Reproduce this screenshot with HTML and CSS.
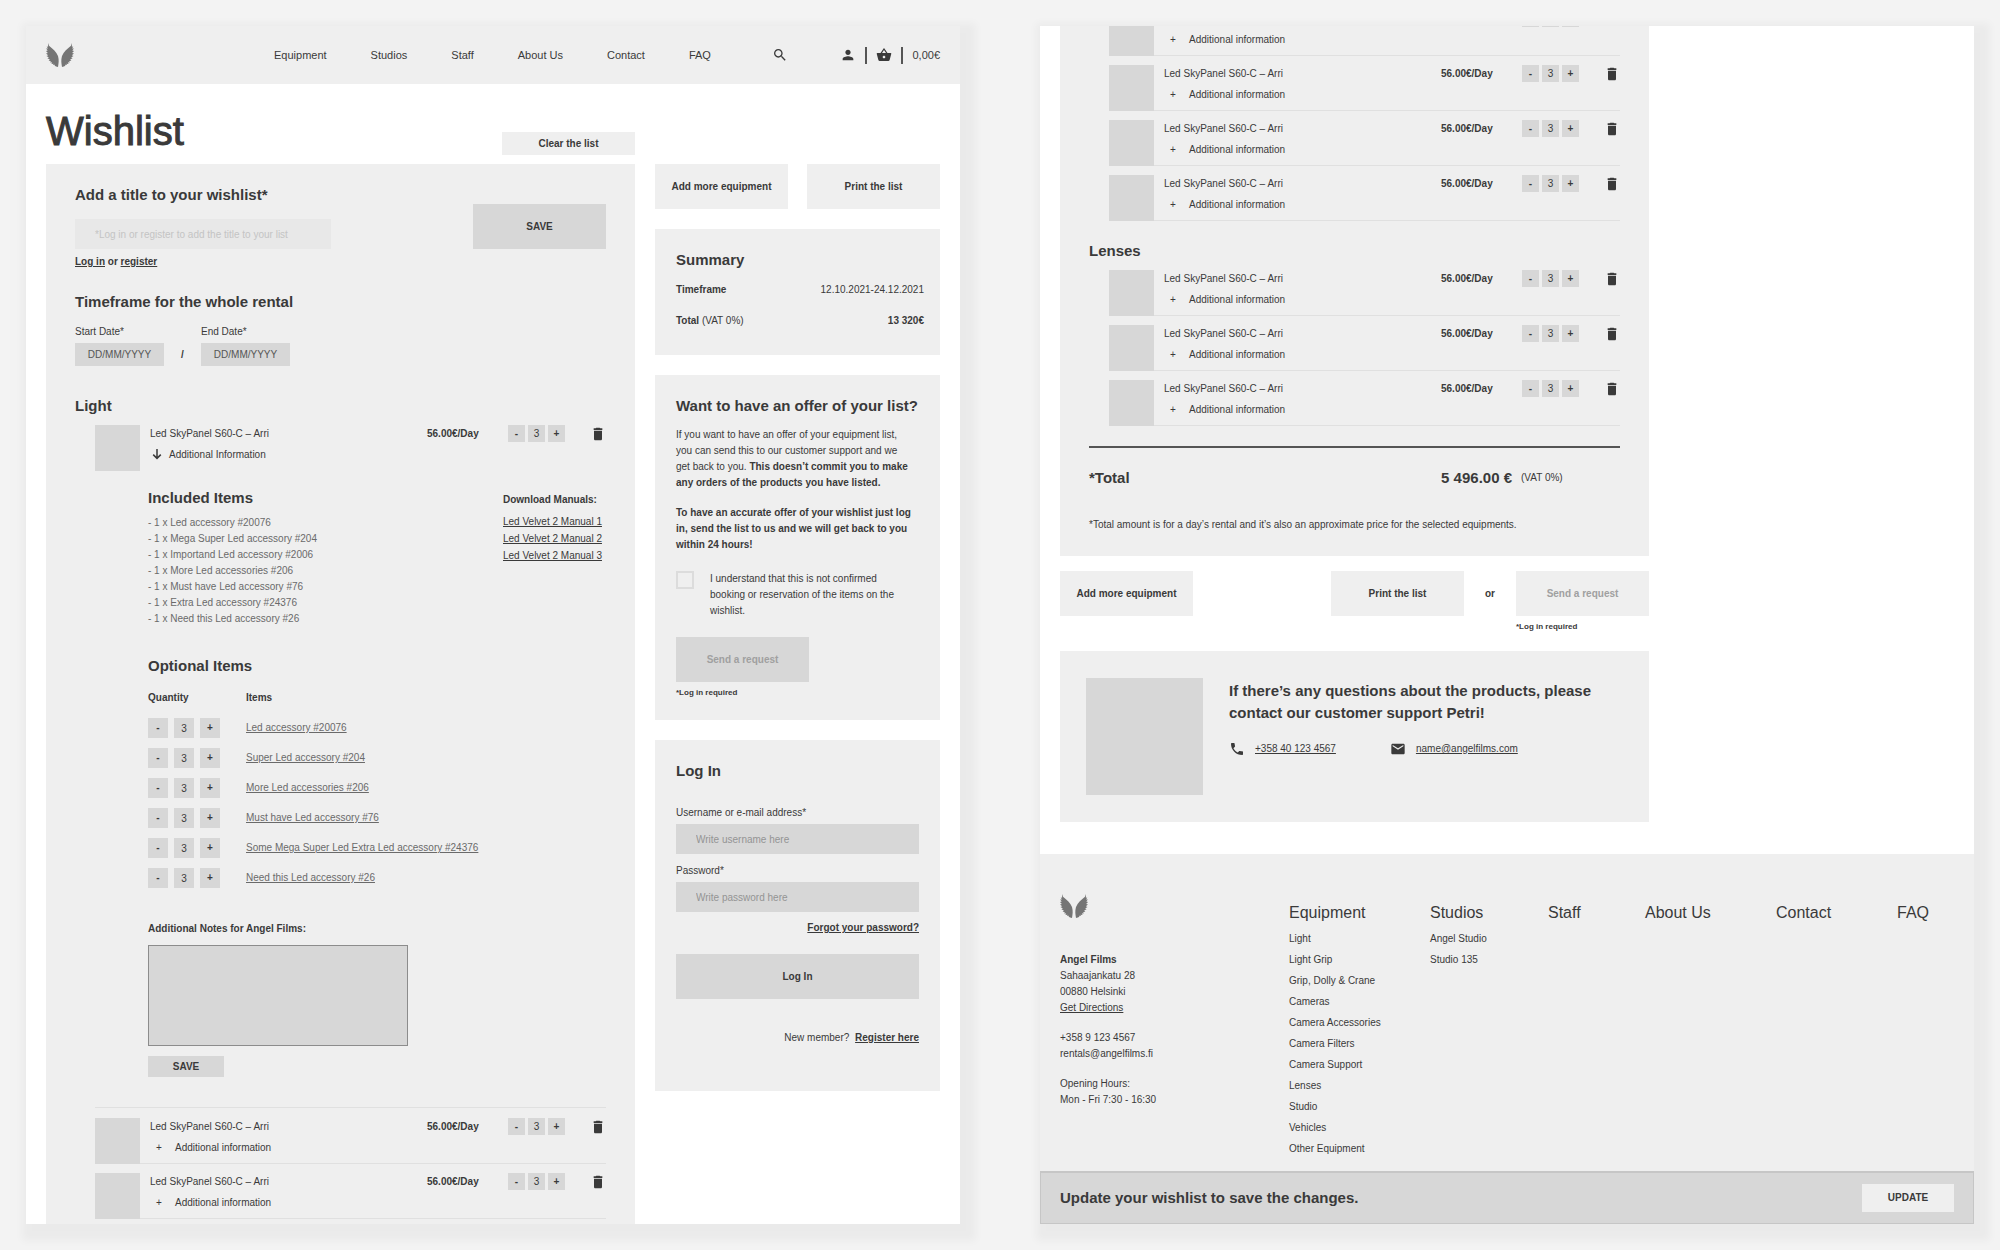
FILE: index.html
```html
<!DOCTYPE html>
<html lang="en">
<head>
    <meta charset="UTF-8">
    <meta name="viewport" content="width=device-width, initial-scale=1.0">
    <title>Wishlist - Angel Films</title>
    <link rel="stylesheet" href="styles.css">
</head>
<body>

<!-- Icon set -->
<svg class="icon-set" aria-hidden="true">
    <symbol id="logo" viewBox="0 0 28 24">
        <path id="wing" d="M2 0L3 2.8C6.4 5.4 10.4 9 12 13C13.2 17 12.6 20.5 12 24C10.6 23.9 9.6 23.5 8.6 22.8L9 21.8L7 22L7.6 20.8L5.4 20.9L6.2 19.6L3.9 19.3L5 18.2L2.6 17.5L3.9 16.4L1.4 15.3L2.9 14.4L.5 12.9L2.2 12.2L0 10.4L1.9 9.9L0 8L1.7 7.6L.1 5.6L1.9 5.6L.7 3.6L2.1 3.7Z"/>
        <use href="#wing" transform="matrix(-1 0 0 1 28 0)"/>
    </symbol>
    <symbol id="search" viewBox="0 0 24 24"><path d="M15.5 14h-.79l-.28-.27C15.41 12.59 16 11.11 16 9.5 16 5.91 13.09 3 9.5 3S3 5.91 3 9.5 5.91 16 9.5 16c1.61 0 3.09-.59 4.23-1.57l.27.28v.79l5 4.99L20.49 19l-4.99-5zm-6 0C7.01 14 5 11.99 5 9.5S7.01 5 9.5 5 14 7.01 14 9.5 11.99 14 9.5 14z"/></symbol>
    <symbol id="person" viewBox="0 0 24 24"><path d="M12 12c2.21 0 4-1.79 4-4s-1.79-4-4-4-4 1.79-4 4 1.79 4 4 4zm0 2c-2.67 0-8 1.34-8 4v2h16v-2c0-2.66-5.33-4-8-4z"/></symbol>
    <symbol id="basket" viewBox="0 0 24 24"><path d="M17.21 9l-4.38-6.56c-.19-.28-.51-.42-.83-.42-.32 0-.64.14-.83.43L6.79 9H2c-.55 0-1 .45-1 1 0 .09.01.18.04.27l2.54 9.27c.23.84 1 1.46 1.92 1.46h13c.92 0 1.69-.62 1.93-1.46l2.54-9.27L23 10c0-.55-.45-1-1-1h-4.79zM9 9l3-4.4L15 9H9zm3 8c-1.1 0-2-.9-2-2s.9-2 2-2 2 .9 2 2-.9 2-2 2z"/></symbol>
    <symbol id="trash" viewBox="0 0 24 24"><path d="M6 19.5c0 1.1.9 2 2 2h8c1.1 0 2-.9 2-2V7H6v12.500zM18.500 3.500h-3l-1-1h-5l-1 1h-3V6h13V3.500z"/></symbol>
    <symbol id="phone" viewBox="0 0 24 24"><path d="M6.62 10.79c1.44 2.83 3.76 5.14 6.59 6.59l2.2-2.2c.27-.27.67-.36 1.02-.24 1.12.37 2.33.57 3.57.57.55 0 1 .45 1 1V20c0 .55-.45 1-1 1-9.39 0-17-7.61-17-17 0-.55.45-1 1-1h3.5c.55 0 1 .45 1 1 0 1.25.2 2.45.57 3.57.11.35.03.74-.25 1.02l-2.2 2.2z"/></symbol>
    <symbol id="mail" viewBox="0 0 24 24"><path d="M20 4H4c-1.1 0-1.99.9-1.99 2L2 18c0 1.1.9 2 2 2h16c1.1 0 2-.9 2-2V6c0-1.1-.9-2-2-2zm0 4l-8 5-8-5V6l8 5 8-5v2z"/></symbol>
    <symbol id="arrow-down" viewBox="0 0 10 12"><path d="M5 1V10.4M1.2 6.6L5 10.4L8.8 6.6" fill="none" stroke="currentColor" stroke-width="1.5"/></symbol>
</svg>

<!-- Top of the wishlist page -->
<div class="screen">
    <header class="header">
        <a href="#" aria-label="Angel Films"><svg class="logo"><use href="#logo"/></svg></a>
        <nav class="main-nav">
            <a href="#">Equipment</a>
            <a href="#">Studios</a>
            <a href="#">Staff</a>
            <a href="#">About Us</a>
            <a href="#">Contact</a>
            <a href="#">FAQ</a>
        </nav>
        <button class="icon-button search-button" aria-label="Search"><svg class="icon"><use href="#search"/></svg></button>
        <div class="header-tools">
            <button class="icon-button" aria-label="Account"><svg class="icon"><use href="#person"/></svg></button>
            <span class="separator"></span>
            <button class="icon-button" aria-label="Basket"><svg class="icon"><use href="#basket"/></svg></button>
            <span class="separator"></span>
            <span>0,00€</span>
        </div>
    </header>

    <main class="wishlist-page">
        <div class="title-row">
            <h1>Wishlist</h1>
            <button class="button button-small">Clear the list</button>
        </div>

        <section class="panel list-panel">
            <form class="title-form">
                <div>
                    <h2><label for="list-title">Add a title to your wishlist*</label></h2>
                    <input class="field title-field" id="list-title" type="text" placeholder="*Log in or register to add the title to your list" disabled>
                </div>
                <button class="button button-dark" type="button">SAVE</button>
            </form>
            <p class="login-hint"><a href="#">Log in</a> or <a href="#">register</a></p>

            <h2 class="timeframe-title">Timeframe for the whole rental</h2>
            <div class="dates">
                <div>
                    <label for="start-date">Start Date*</label>
                    <input class="date-field" id="start-date" type="text" placeholder="DD/MM/YYYY">
                </div>
                <span class="slash">/</span>
                <div>
                    <label for="end-date">End Date*</label>
                    <input class="date-field" id="end-date" type="text" placeholder="DD/MM/YYYY">
                </div>
            </div>

            <h2 class="category">Light</h2>
            <article class="item">
                <div class="thumb"></div>
                <div class="item-info item-open">
                    <span class="item-name">Led SkyPanel S60-C – Arri</span>
                    <b class="price">56.00€/Day</b>
                    <div class="stepper"><button>-</button><input type="text" value="3" aria-label="Quantity"><button>+</button></div>
                    <button class="icon-button" aria-label="Remove"><svg class="icon"><use href="#trash"/></svg></button>
                    <button class="more more-open"><svg class="arrow"><use href="#arrow-down"/></svg>Additional Information</button>
                </div>
            </article>

            <div class="details">
                <div class="included">
                    <div>
                        <h2>Included Items</h2>
                        <ul class="included-list">
                            <li>- 1 x Led accessory #20076</li>
                            <li>- 1 x Mega Super Led accessory #204</li>
                            <li>- 1 x Importand Led accessory #2006</li>
                            <li>- 1 x More Led accessories #206</li>
                            <li>- 1 x Must have Led accessory #76</li>
                            <li>- 1 x Extra Led accessory #24376</li>
                            <li>- 1 x Need this Led accessory #26</li>
                        </ul>
                    </div>
                    <div class="manuals">
                        <h3>Download Manuals:</h3>
                        <a href="#">Led Velvet 2 Manual 1</a>
                        <a href="#">Led Velvet 2 Manual 2</a>
                        <a href="#">Led Velvet 2 Manual 3</a>
                    </div>
                </div>

                <h2 class="optional-title">Optional Items</h2>
                <table class="optional">
                    <thead>
                        <tr><th>Quantity</th><th>Items</th></tr>
                    </thead>
                    <tbody>
                        <tr>
                            <td><div class="stepper stepper-big"><button>-</button><input type="text" value="3" aria-label="Quantity"><button>+</button></div></td>
                            <td><a href="#">Led accessory #20076</a></td>
                        </tr>
                        <tr>
                            <td><div class="stepper stepper-big"><button>-</button><input type="text" value="3" aria-label="Quantity"><button>+</button></div></td>
                            <td><a href="#">Super Led accessory #204</a></td>
                        </tr>
                        <tr>
                            <td><div class="stepper stepper-big"><button>-</button><input type="text" value="3" aria-label="Quantity"><button>+</button></div></td>
                            <td><a href="#">More Led accessories #206</a></td>
                        </tr>
                        <tr>
                            <td><div class="stepper stepper-big"><button>-</button><input type="text" value="3" aria-label="Quantity"><button>+</button></div></td>
                            <td><a href="#">Must have Led accessory #76</a></td>
                        </tr>
                        <tr>
                            <td><div class="stepper stepper-big"><button>-</button><input type="text" value="3" aria-label="Quantity"><button>+</button></div></td>
                            <td><a href="#">Some Mega Super Led Extra Led accessory #24376</a></td>
                        </tr>
                        <tr>
                            <td><div class="stepper stepper-big"><button>-</button><input type="text" value="3" aria-label="Quantity"><button>+</button></div></td>
                            <td><a href="#">Need this Led accessory #26</a></td>
                        </tr>
                    </tbody>
                </table>

                <label class="notes-label" for="notes">Additional Notes for Angel Films:</label>
                <textarea class="notes" id="notes"></textarea>
                <button class="button button-dark notes-save">SAVE</button>
            </div>

            <div class="divider"></div>
            <article class="item">
                <div class="thumb"></div>
                <div class="item-info">
                    <span class="item-name">Led SkyPanel S60-C – Arri</span>
                    <b class="price">56.00€/Day</b>
                    <div class="stepper"><button>-</button><input type="text" value="3" aria-label="Quantity"><button>+</button></div>
                    <button class="icon-button" aria-label="Remove"><svg class="icon"><use href="#trash"/></svg></button>
                    <button class="more"><span class="plus">+</span>Additional information</button>
                </div>
            </article>
            <article class="item">
                <div class="thumb"></div>
                <div class="item-info">
                    <span class="item-name">Led SkyPanel S60-C – Arri</span>
                    <b class="price">56.00€/Day</b>
                    <div class="stepper"><button>-</button><input type="text" value="3" aria-label="Quantity"><button>+</button></div>
                    <button class="icon-button" aria-label="Remove"><svg class="icon"><use href="#trash"/></svg></button>
                    <button class="more"><span class="plus">+</span>Additional information</button>
                </div>
            </article>
        </section>

        <aside class="sidebar">
            <div class="sidebar-buttons">
                <button class="button">Add more equipment</button>
                <button class="button">Print the list</button>
            </div>

            <section class="panel summary">
                <h2>Summary</h2>
                <div class="summary-row"><b>Timeframe</b><span>12.10.2021-24.12.2021</span></div>
                <div class="summary-row"><span><b>Total</b> (VAT 0%)</span><b>13 320€</b></div>
            </section>

            <section class="panel offer">
                <h2>Want to have an offer of your list?</h2>
                <p>If you want to have an offer of your equipment list, you can send this to our customer support and we get back to you. <b>This doesn’t commit you to make any orders of the products you have listed.</b></p>
                <p><b>To have an accurate offer of your wishlist just log in, send the list to us and we will get back to you within 24 hours!</b></p>
                <div class="confirm">
                    <input type="checkbox" id="confirm">
                    <label for="confirm">I understand that this is not confirmed booking or reservation of the items on the wishlist.</label>
                </div>
                <button class="button button-dark" disabled>Send a request</button>
                <p class="caption">*Log in required</p>
            </section>

            <form class="panel login">
                <h2>Log In</h2>
                <label for="username">Username or e-mail address*</label>
                <input class="field" id="username" type="text" placeholder="Write username here">
                <label for="password">Password*</label>
                <input class="field" id="password" type="password" placeholder="Write password here">
                <a class="forgot" href="#">Forgot your password?</a>
                <button class="button button-dark" type="button">Log In</button>
                <p class="register">New member? <a href="#">Register here</a></p>
            </form>
        </aside>
    </main>
</div>

<!-- Bottom of the wishlist page -->
<div class="screen screen-end">
    <main class="list-end">
        <section class="panel list-panel">
            <article class="item">
                <div class="thumb"></div>
                <div class="item-info">
                    <span class="item-name">Led SkyPanel S60-C – Arri</span>
                    <b class="price">56.00€/Day</b>
                    <div class="stepper"><button>-</button><input type="text" value="3" aria-label="Quantity"><button>+</button></div>
                    <button class="icon-button" aria-label="Remove"><svg class="icon"><use href="#trash"/></svg></button>
                    <button class="more"><span class="plus">+</span>Additional information</button>
                </div>
            </article>
            <article class="item">
                <div class="thumb"></div>
                <div class="item-info">
                    <span class="item-name">Led SkyPanel S60-C – Arri</span>
                    <b class="price">56.00€/Day</b>
                    <div class="stepper"><button>-</button><input type="text" value="3" aria-label="Quantity"><button>+</button></div>
                    <button class="icon-button" aria-label="Remove"><svg class="icon"><use href="#trash"/></svg></button>
                    <button class="more"><span class="plus">+</span>Additional information</button>
                </div>
            </article>
            <article class="item">
                <div class="thumb"></div>
                <div class="item-info">
                    <span class="item-name">Led SkyPanel S60-C – Arri</span>
                    <b class="price">56.00€/Day</b>
                    <div class="stepper"><button>-</button><input type="text" value="3" aria-label="Quantity"><button>+</button></div>
                    <button class="icon-button" aria-label="Remove"><svg class="icon"><use href="#trash"/></svg></button>
                    <button class="more"><span class="plus">+</span>Additional information</button>
                </div>
            </article>
            <article class="item">
                <div class="thumb"></div>
                <div class="item-info">
                    <span class="item-name">Led SkyPanel S60-C – Arri</span>
                    <b class="price">56.00€/Day</b>
                    <div class="stepper"><button>-</button><input type="text" value="3" aria-label="Quantity"><button>+</button></div>
                    <button class="icon-button" aria-label="Remove"><svg class="icon"><use href="#trash"/></svg></button>
                    <button class="more"><span class="plus">+</span>Additional information</button>
                </div>
            </article>

            <h2 class="category category-next">Lenses</h2>
            <article class="item">
                <div class="thumb"></div>
                <div class="item-info">
                    <span class="item-name">Led SkyPanel S60-C – Arri</span>
                    <b class="price">56.00€/Day</b>
                    <div class="stepper"><button>-</button><input type="text" value="3" aria-label="Quantity"><button>+</button></div>
                    <button class="icon-button" aria-label="Remove"><svg class="icon"><use href="#trash"/></svg></button>
                    <button class="more"><span class="plus">+</span>Additional information</button>
                </div>
            </article>
            <article class="item">
                <div class="thumb"></div>
                <div class="item-info">
                    <span class="item-name">Led SkyPanel S60-C – Arri</span>
                    <b class="price">56.00€/Day</b>
                    <div class="stepper"><button>-</button><input type="text" value="3" aria-label="Quantity"><button>+</button></div>
                    <button class="icon-button" aria-label="Remove"><svg class="icon"><use href="#trash"/></svg></button>
                    <button class="more"><span class="plus">+</span>Additional information</button>
                </div>
            </article>
            <article class="item">
                <div class="thumb"></div>
                <div class="item-info">
                    <span class="item-name">Led SkyPanel S60-C – Arri</span>
                    <b class="price">56.00€/Day</b>
                    <div class="stepper"><button>-</button><input type="text" value="3" aria-label="Quantity"><button>+</button></div>
                    <button class="icon-button" aria-label="Remove"><svg class="icon"><use href="#trash"/></svg></button>
                    <button class="more"><span class="plus">+</span>Additional information</button>
                </div>
            </article>

            <div class="total">
                <h2>*Total</h2>
                <h2>5 496.00 €</h2>
                <span>(VAT 0%)</span>
            </div>
            <p class="total-note">*Total amount is for a day’s rental and it’s also an approximate price for the selected equipments.</p>
        </section>

        <div class="actions">
            <button class="button">Add more equipment</button>
            <button class="button print-button">Print the list</button>
            <b class="or">or</b>
            <div>
                <button class="button" disabled>Send a request</button>
                <p class="caption">*Log in required</p>
            </div>
        </div>

        <section class="panel support">
            <div class="portrait"></div>
            <div>
                <h2>If there’s any questions about the products, please contact our customer support Petri!</h2>
                <div class="contacts">
                    <a href="#"><svg class="icon"><use href="#phone"/></svg><span>+358 40 123 4567</span></a>
                    <a href="#"><svg class="icon"><use href="#mail"/></svg><span>name@angelfilms.com</span></a>
                </div>
            </div>
        </section>
    </main>

    <footer class="footer">
        <div class="address">
            <svg class="logo"><use href="#logo"/></svg>
            <p><b>Angel Films</b><br>Sahaajankatu 28<br>00880 Helsinki<br><a href="#">Get Directions</a></p>
            <p>+358 9 123 4567<br>rentals@angelfilms.fi</p>
            <p>Opening Hours:<br>Mon - Fri 7:30 - 16:30</p>
        </div>
        <div class="footer-column">
            <a class="footer-title" href="#">Equipment</a>
            <a href="#">Light</a>
            <a href="#">Light Grip</a>
            <a href="#">Grip, Dolly &amp; Crane</a>
            <a href="#">Cameras</a>
            <a href="#">Camera Accessories</a>
            <a href="#">Camera Filters</a>
            <a href="#">Camera Support</a>
            <a href="#">Lenses</a>
            <a href="#">Studio</a>
            <a href="#">Vehicles</a>
            <a href="#">Other Equipment</a>
        </div>
        <div class="footer-column">
            <a class="footer-title" href="#">Studios</a>
            <a href="#">Angel Studio</a>
            <a href="#">Studio 135</a>
        </div>
        <div class="footer-column"><a class="footer-title" href="#">Staff</a></div>
        <div class="footer-column"><a class="footer-title" href="#">About Us</a></div>
        <div class="footer-column"><a class="footer-title" href="#">Contact</a></div>
        <div class="footer-column"><a class="footer-title" href="#">FAQ</a></div>
    </footer>

    <div class="update-bar">
        <h2>Update your wishlist to save the changes.</h2>
        <button class="button update-button">UPDATE</button>
    </div>
</div>

</body>
</html>
```

FILE: styles.css
```css
* {
    box-sizing: border-box;
}
body {
    display: flex;
    gap: 80px;
    margin: 0;
    padding: 26px;
    background-color: #f3f3f3;
    color: #3a3a3a;
    font-family: "Liberation Sans", Arial, Helvetica, sans-serif;
    font-size: 10px;
    line-height: 16px;
}
h1, h2, h3, p, ul {
    margin: 0;
    padding: 0;
}
h1 {
    font-size: 40px;
    font-weight: normal;
    line-height: 47px;
    -webkit-text-stroke: 1px #3a3a3a;
}
h2 {
    font-size: 15px;
    line-height: 20px;
}
h3 {
    font-size: 10px;
}
a {
    color: inherit;
}
button, input, textarea {
    margin: 0;
    padding: 0;
    border: none;
    border-radius: 0;
    color: inherit;
    font: inherit;
}
button {
    cursor: pointer;
}
.icon-set {
    display: none;
}
.icon {
    display: block;
    width: 16px;
    height: 16px;
    fill: currentColor;
}
.logo {
    display: block;
    width: 28px;
    height: 24px;
    fill: #757575;
}

/* Page views */
.screen {
    display: flex;
    flex: 1;
    flex-direction: column;
    min-width: 0;
    height: calc(100vh - 52px);
    overflow: hidden;
    background-color: white;
    box-shadow: 6px 7px 8px 10px rgba(0,0,0,0.035);
}
.screen-end {
    justify-content: flex-end; /* Shows the end of the page */
}
.screen > * {
    flex-shrink: 0;
}
.panel {
    background-color: #efefef;
}

/* Buttons and fields */
.button {
    width: 133px;
    height: 45px;
    background-color: #efefef;
    font-weight: bold;
}
.button:disabled {
    color: #a0a0a0;
}
.button-small {
    height: 23px;
}
.button-dark {
    background-color: #d7d7d7;
}
.icon-button {
    background: none;
}
.field {
    display: block;
    width: 100%;
    height: 30px;
    padding: 0 20px;
    background-color: #d7d7d7;
}
.field::placeholder {
    color: #949494;
}
.caption {
    margin-top: 5px;
    font-size: 8px;
    font-weight: bold;
    line-height: 12px;
}

/* Header */
.header {
    display: flex;
    align-items: center;
    height: 58px;
    padding: 0 20px;
    background-color: #efefef;
    font-size: 11px;
}
.main-nav {
    display: flex;
    gap: 44px;
    margin-left: 200px;
}
.main-nav a {
    text-decoration: none;
}
.search-button {
    margin-left: auto;
}
.header-tools {
    display: flex;
    align-items: center;
    gap: 9px;
    margin-left: 52px;
}
.separator {
    width: 2px;
    height: 17px;
    background-color: #555;
}

/* Wishlist */
.wishlist-page {
    display: grid;
    flex: 1;
    grid-template-columns: 1fr 285px;
    grid-template-rows: auto 1fr;
    column-gap: 20px;
    padding: 0 20px;
}
.title-row {
    display: flex;
    grid-column: 1 / 3;
    align-items: flex-end;
    justify-content: space-between;
    margin-right: 305px;
    padding: 24px 0 9px;
}
.list-panel {
    padding: 21px 29px 23px;
}
.title-form {
    display: flex;
    align-items: flex-end;
    justify-content: space-between;
}
.title-field {
    width: 256px;
    margin-top: 14px;
    background-color: #e8e8e8;
}
.title-field::placeholder {
    color: #c4c4c4;
}
.login-hint {
    margin-top: 5px;
    font-weight: bold;
}
.timeframe-title {
    margin: 22px 0 12px;
}
.dates {
    display: flex;
    align-items: flex-end;
}
.date-field {
    display: block;
    width: 89px;
    height: 23px;
    margin-top: 3px;
    background-color: #d7d7d7;
    text-align: center;
}
.date-field::placeholder {
    color: #555;
}
.slash {
    width: 37px;
    font-weight: bold;
    line-height: 23px;
    text-align: center;
}
.category {
    margin: 30px 0 9px;
}
.category-next {
    margin-top: 20px;
}

/* Item rows */
.item {
    display: flex;
    margin: 0 0 9px 20px;
}
.thumb {
    width: 45px;
    height: 46px;
    background-color: #d7d7d7;
}
.item-info {
    display: grid;
    flex: 1;
    grid-template-columns: 1fr 81px 82px 16px;
    grid-template-rows: 17px 16px;
    row-gap: 4px;
    padding-left: 10px;
    border-bottom: 1px solid #e0e0e0;
    line-height: 17px;
}
.item-open {
    border-bottom: none;
}
.more {
    display: flex;
    align-items: center;
    background: none;
}
.plus {
    width: 25px;
    padding-left: 6px;
    text-align: left;
}
.arrow {
    width: 10px;
    height: 12px;
    margin: 0 7px 0 2px;
}
.stepper {
    display: flex;
    gap: 3px;
}
.stepper button, .stepper input {
    width: 17px;
    height: 17px;
    background-color: #d7d7d7;
    text-align: center;
}
.stepper button {
    font-weight: bold;
}
.stepper-big {
    gap: 6px;
}
.stepper-big button, .stepper-big input {
    width: 20px;
    height: 20px;
}
.divider {
    margin: 30px 0 10px 20px;
    border-top: 1px solid #e0e0e0;
}

/* Opened item */
.details {
    margin: 17px 0 0 73px;
}
.included {
    display: flex;
    justify-content: space-between;
}
.included-list {
    margin-top: 7px;
    color: #6a6a6a;
    list-style: none;
}
.manuals {
    width: 103px;
    padding-top: 3px;
    line-height: 17px;
    white-space: nowrap;
}
.manuals h3 {
    margin-bottom: 5px;
}
.manuals a {
    display: block;
}
.optional-title {
    margin: 29px 0 14px;
}
.optional {
    border-spacing: 0;
    color: #6a6a6a;
}
.optional th {
    padding: 0 0 7px;
    color: #3a3a3a;
    text-align: left;
}
.optional td {
    height: 30px;
    padding: 0;
}
.optional th:first-child {
    width: 98px;
}
.optional .stepper {
    color: #3a3a3a;
}
.notes-label {
    display: block;
    margin: 28px 0 8px;
    font-weight: bold;
}
.notes {
    display: block;
    width: 260px;
    height: 101px;
    border: 1px solid #8c8c8c;
    background-color: #d7d7d7;
    resize: none;
}
.notes-save {
    width: 76px;
    height: 21px;
    margin-top: 10px;
}

/* Sidebar */
.sidebar {
    display: flex;
    flex-direction: column;
    gap: 20px;
}
.sidebar-buttons {
    display: flex;
    justify-content: space-between;
}
.summary, .offer {
    padding: 21px 16px 21px 21px;
}
.summary {
    padding-bottom: 26px;
}
.summary-row {
    display: flex;
    justify-content: space-between;
    margin-top: 15px;
}
.summary h2 + .summary-row {
    margin-top: 12px;
}
.offer h2 {
    margin-bottom: 11px;
    white-space: nowrap;
}
.offer p {
    max-width: 237px;
}
.offer p + p {
    margin-top: 14px;
}
.confirm {
    display: flex;
    gap: 16px;
    margin: 18px 0;
}
.confirm input {
    flex-shrink: 0;
    width: 18px;
    height: 18px;
    border: 2px solid #dcdcdc;
    appearance: none;
}
.confirm label {
    width: 200px;
}
.login {
    padding: 21px 21px 45px;
}
.login h2 {
    margin-bottom: 24px;
}
.login label {
    display: block;
    margin: 9px 0 3px;
}
.forgot {
    display: block;
    width: max-content;
    margin: 8px 0 18px auto;
    font-weight: bold;
}
.login .button {
    width: 100%;
}
.register {
    margin-top: 31px;
    text-align: right;
}
.register a {
    margin-left: 3px;
    font-weight: bold;
}

/* End of the list */
.list-end {
    margin: 0 325px 32px 20px;
}
.total {
    display: grid;
    grid-template-columns: 1fr auto 99px;
    column-gap: 9px;
    align-items: center;
    margin: 20px 0 29px;
    padding-top: 20px;
    border-top: 2px solid #555;
}
.actions {
    display: flex;
    align-items: flex-start;
    margin: 15px 0 18px;
}
.print-button {
    margin-left: auto;
}
.or {
    width: 52px;
    line-height: 45px;
    text-align: center;
}
.support {
    display: flex;
    gap: 26px;
    padding: 27px 26px;
}
.portrait {
    flex-shrink: 0;
    width: 117px;
    height: 117px;
    background-color: #d7d7d7;
}
.support h2 {
    line-height: 22px;
    margin-top: 2px;
}
.contacts {
    display: flex;
    gap: 54px;
    margin-top: 17px;
}
.contacts a {
    display: flex;
    gap: 10px;
}

/* Footer */
.footer {
    display: grid;
    grid-template-columns: 229fr 141fr 118fr 97fr 131fr 121fr 57fr;
    padding: 40px 20px 12px;
    background-color: #efefef;
}
.address p {
    margin-top: 14px;
}
.address .logo + p {
    margin-top: 34px;
}
.footer-column {
    display: flex;
    flex-direction: column;
    padding-top: 9px;
    line-height: 21px;
    white-space: nowrap;
}
.footer-column a {
    text-decoration: none;
}
.footer-column .footer-title {
    margin-bottom: 5px;
    font-size: 16px;
    line-height: 20px;
}

/* Save reminder */
.update-bar {
    display: flex;
    align-items: center;
    justify-content: space-between;
    padding: 11px 19px;
    border: 1px solid #c6c6c6;
    border-top-width: 2px;
    background-color: #d7d7d7;
}
.update-button {
    width: 92px;
    height: 28px;
}
```
